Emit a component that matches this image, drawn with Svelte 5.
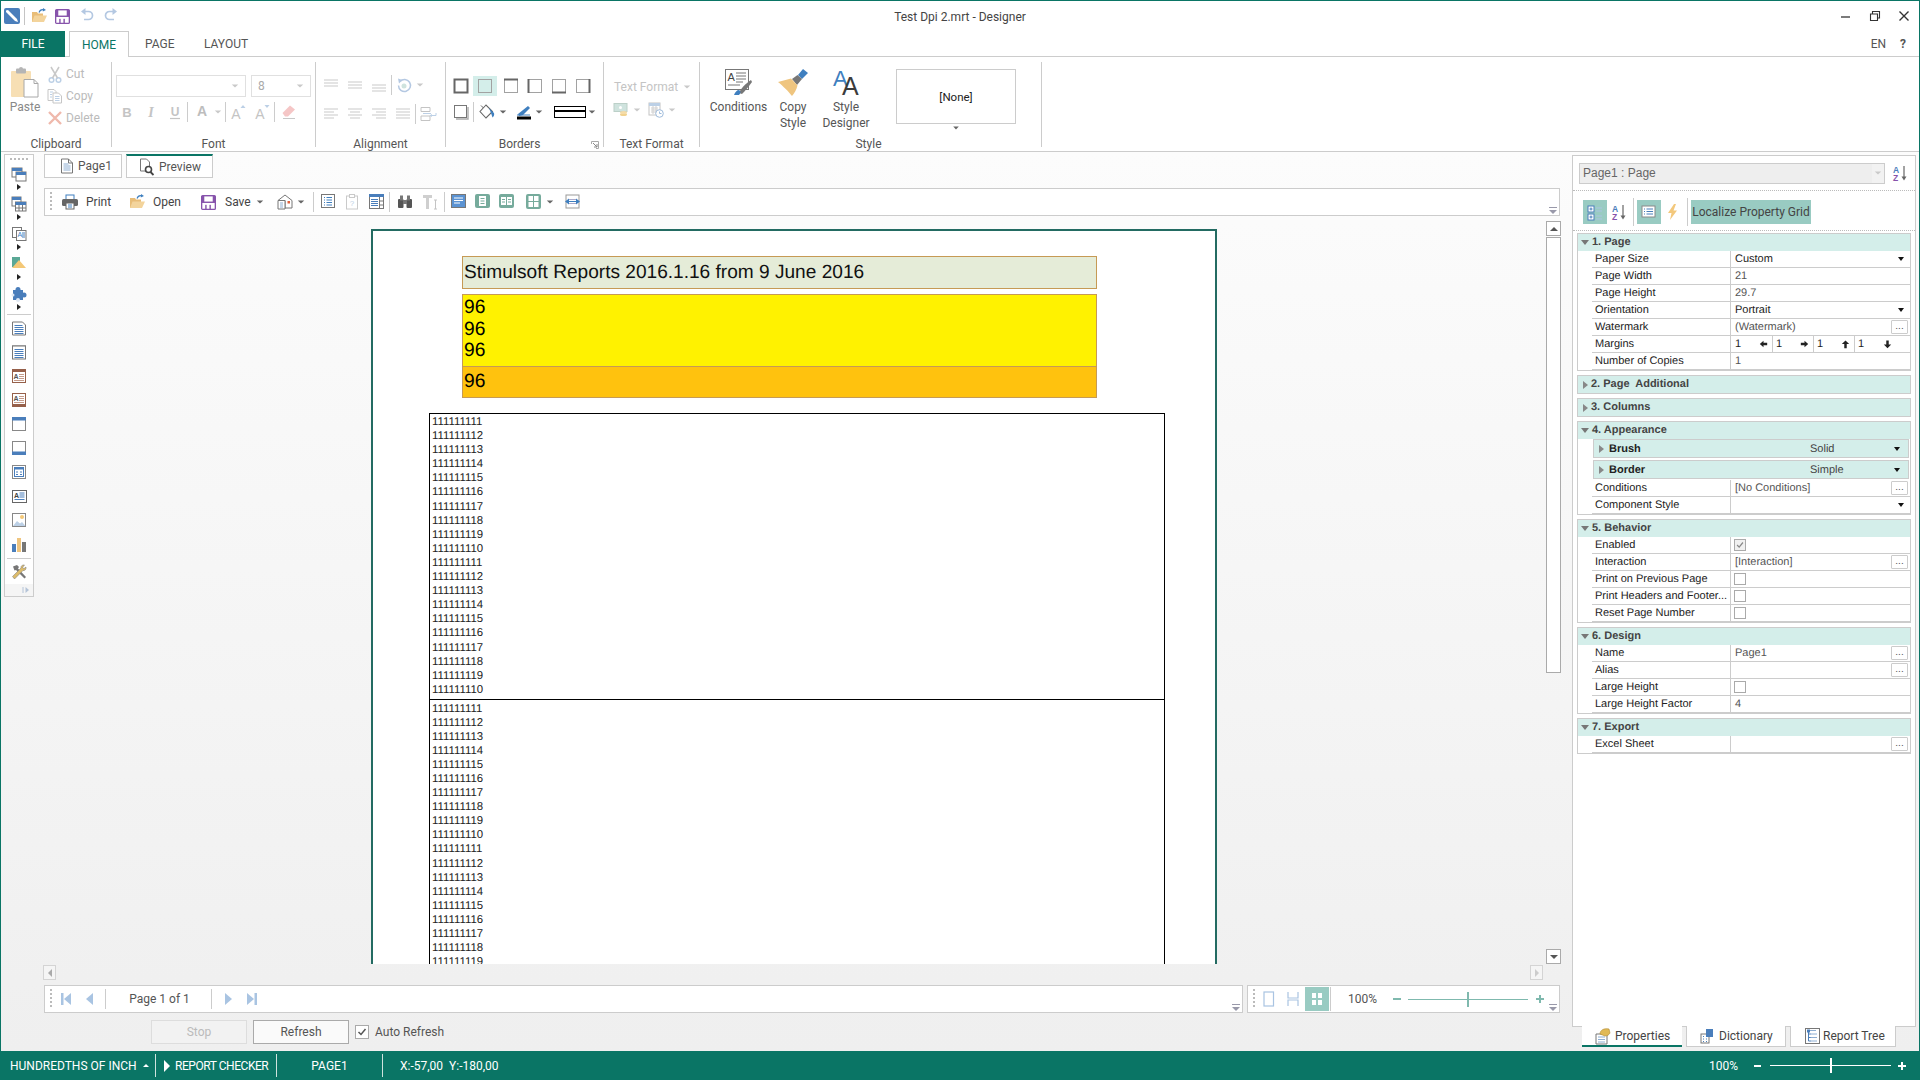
<script>
  // icons are plain svg fragments, 16x16 unless the caller sets a class
  const icons = {
    logo: '<rect width="16" height="16" rx="2" fill="#4a7ebb"/><path d="M2 2.5 4 2l9 9 1 3-3-1-9-9z" fill="#fff"/>',
    open: '<path d="M1 4h5l1 1.5h5V14H1z" fill="#e8bd78"/><path d="M1 14l2.5-6.5H16L13 14z" fill="#f3d49c"/><path d="M8 4.5C9 2 11 1.2 13 2" stroke="#3f7fbf" stroke-width="1.1" fill="none"/><path d="M12 0l3 2-3.2 1.6z" fill="#3f7fbf"/>',
    save: '<rect x=".7" y=".7" width="14.6" height="14.6" rx="1" fill="#fff" stroke="#8753ab" stroke-width="1.4"/><rect x="1" y="1" width="14" height="7.5" fill="#8753ab"/><rect x="3.5" y="1.5" width="9" height="5.5" fill="#fff"/><rect x="4.5" y="10.5" width="1.5" height="4.5" fill="#8753ab"/><rect x="9" y="10.5" width="1.5" height="4.5" fill="#8753ab"/>',
    undo: '<path d="M6 3.5H9.5a3.8 3.8 0 0 1 0 8H5" stroke="#b4c8e2" stroke-width="1.7" fill="none"/><path d="M6.5 0 2 3.5 6.5 7z" fill="#b4c8e2"/>',
    redo: '<path d="M10 3.5H6.5a3.8 3.8 0 0 0 0 8H11" stroke="#b4c8e2" stroke-width="1.7" fill="none"/><path d="M9.5 0 14 3.5 9.5 7z" fill="#b4c8e2"/>',
    paste: '<rect x="0" y="4" width="20" height="26" rx="1" fill="#f7dfb4"/><rect x="5" y="1.5" width="10" height="5" rx="1" fill="#b5b5b5"/><circle cx="10" cy="2" r="2" fill="#b5b5b5"/><path d="M13 12.5h10l4 4V30H13z" fill="#fff" stroke="#a8a8a8"/><path d="M23 12.5v4h4" fill="none" stroke="#a8a8a8"/>',
    cut: '<circle cx="4.5" cy="14" r="2.3" fill="none" stroke="#bcd0e6" stroke-width="1.5"/><circle cx="11.5" cy="14" r="2.3" fill="none" stroke="#bcd0e6" stroke-width="1.5"/><path d="M10.5 12 4 1M5.5 12 12 1" stroke="#c8c8c8" stroke-width="1.5"/>',
    copy: '<path d="M1 1.5h6l2 2v9H1z" fill="#fff" stroke="#c6c6c6"/><path d="M6 5h5.5L14.5 8v7H6z" fill="#fff" stroke="#c6c6c6"/><path d="M3 4h3M3 6.5h2M3 9h2M8 8.5h4.5M8 10.5h4.5M8 12.5h4.5" stroke="#bcd0e6"/>',
    del: '<path d="M2 2l12 12M14 2 2 14" stroke="#efb9ac" stroke-width="2.4"/>',
    bold: '<text x="8" y="13" text-anchor="middle" font-family="Liberation Sans" font-weight="700" font-size="13" fill="#c4c4c4">B</text>',
    ital: '<text x="8" y="13" text-anchor="middle" font-family="Liberation Serif" font-style="italic" font-weight="700" font-size="14" fill="#c4c4c4">I</text>',
    under: '<text x="8" y="12" text-anchor="middle" font-family="Liberation Sans" font-weight="700" font-size="12" fill="#c4c4c4">U</text><path d="M3 14.5h10" stroke="#c4c4c4" stroke-width="1.2"/>',
    fcolor: '<text x="8" y="12" text-anchor="middle" font-family="Liberation Sans" font-weight="700" font-size="14" fill="#bdbdbd">A</text>',
    grow: '<text x="6" y="15" text-anchor="middle" font-family="Liberation Sans" font-size="14" fill="#c4c4c4">A</text><path d="M10.5 4 13 1l2.5 3z" fill="#bcd0e6"/>',
    shrink: '<text x="6" y="15" text-anchor="middle" font-family="Liberation Sans" font-size="14" fill="#c4c4c4">A</text><path d="M10.5 1 13 4l2.5-3z" fill="#bcd0e6"/>',
    erase: '<path d="M1.5 9 9 1.5l5 4L7 12.5H4z" fill="#f5c6c6"/><path d="M2 14.5h12" stroke="#c8c8c8"/>',
    alTop: '<path d="M1 3h14M1 6h14M1 9h14" stroke="#c9c9c9"/>',
    alMid: '<path d="M1 5h14M1 8h14M1 11h14" stroke="#c9c9c9"/>',
    alBot: '<path d="M1 8h14M1 11h14M1 14h14" stroke="#c9c9c9"/>',
    rotate: '<path d="M4 4.5a6 6 0 1 1-1.5 4" fill="none" stroke="#b4c8e2" stroke-width="1.5"/><path d="M2 1.5 6.5 3 3 6.5z" fill="#b4c8e2"/><circle cx="8" cy="9" r="2.5" fill="#cfe3de"/>',
    left: '<path d="M1 3h14M1 6h10M1 9h14M1 12h10" stroke="#c9c9c9"/>',
    center: '<path d="M1 3h14M3 6h10M1 9h14M3 12h10" stroke="#c9c9c9"/>',
    right: '<path d="M1 3h14M5 6h10M1 9h14M5 12h10" stroke="#c9c9c9"/>',
    just: '<path d="M1 3h14M1 6h14M1 9h14M1 12h14" stroke="#c9c9c9"/>',
    wrap: '<path d="M1 1.5h9v4H1zM1 10h9v4.5H1z" fill="#fff" stroke="#c4c4c4"/><path d="M3 7.5h8M16 7v2.5h-5" stroke="#bcd0e6" fill="none"/><path d="M12 8l-2.5 1.5L12 11z" fill="#bcd0e6"/>',
    bAll: '<rect x="1.5" y="1.5" width="13" height="13" fill="none" stroke="#666" stroke-width="2"/>',
    bNone: '<rect x="1.5" y="1.5" width="13" height="13" fill="none" stroke="#a2a2a2" stroke-width="1"/>',
    bTop: '<rect x="1.5" y="1.5" width="13" height="13" fill="none" stroke="#a2a2a2"/><path d="M1 1.5h14" stroke="#666" stroke-width="2"/>',
    bLeft: '<rect x="1.5" y="1.5" width="13" height="13" fill="none" stroke="#a2a2a2"/><path d="M1.5 1v14" stroke="#666" stroke-width="2"/>',
    bBot: '<rect x="1.5" y="1.5" width="13" height="13" fill="none" stroke="#a2a2a2"/><path d="M1 14.5h14" stroke="#666" stroke-width="2"/>',
    bRight: '<rect x="1.5" y="1.5" width="13" height="13" fill="none" stroke="#a2a2a2"/><path d="M14.5 1v14" stroke="#666" stroke-width="2"/>',
    bShadow: '<rect x="1.5" y="1.5" width="12" height="12" fill="none" stroke="#777"/><path d="M15 3v12H3" fill="none" stroke="#aaa" stroke-width="1.4"/>',
    fill: '<path d="M7 1 1 7.5 7 14l6.5-6.5z" fill="#fff" stroke="#666" stroke-width="1.1"/><path d="M4.5 4 2 1.5" stroke="#666"/><path d="M10 4 15 9c.6 2-.4 4-1.5 4.5L12 9z" fill="#3f7fbf"/>',
    pencil: '<path d="M2 10 12 2l2 2-7 7-4 1z" fill="#3f7fbf"/><path d="M1 11h13" stroke="#3f7fbf"/><rect x="1" y="12.5" width="14" height="3" fill="#000"/>',
    money: '<rect x="1" y="1.5" width="13" height="8" fill="#cfe3de" stroke="#bcd0c8"/><circle cx="7.5" cy="5.5" r="1.5" fill="#fff"/><ellipse cx="10.5" cy="12.5" rx="3.5" ry="1.5" fill="#f1d28f"/><ellipse cx="10.5" cy="10.5" rx="3.5" ry="1.5" fill="#f5dca8"/>',
    cal: '<rect x="1" y="1" width="11" height="12" fill="#fff" stroke="#c4c4c4"/><rect x="1" y="1" width="11" height="3" fill="#bcd0e6"/><path d="M3 6h7M3 8h7M3 10h7M5 4v8M8 4v8" stroke="#cfcfcf"/><circle cx="11.5" cy="11.5" r="3.8" fill="#fff" stroke="#9fbcdc"/><path d="M11.5 9.5v2h2" stroke="#9fbcdc" fill="none"/>',
    cond: '<rect x=".5" y=".5" width="23" height="20" fill="#fff" stroke="#777"/><text x="2.5" y="12" font-family="Liberation Sans" font-size="11" fill="#444">A</text><path d="M11 4h10M11 7h10M11 10h10M11 13h7M3 16h12" stroke="#777"/><path d="M14 24c1.5-4 6-9 12-13l1 2c-3 4-7 9-10 12z" fill="#777"/><path d="M9 26c1-3 3-5 5-5 2 1 2 3 0 5z" fill="#3f7fbf"/>',
    brush: '<path d="M24 0l5 4-6 6-4-4z" fill="#3f7fbf"/><path d="M18.5 6 13 10l5 6 5-6z" fill="#777"/><path d="M-1 13 12 9.500l6.500 7c-1 4-3 8-5.500 10.500C10 23 4 17 -1 13z" fill="#efc57f"/>',
    styleD: '<text x="1" y="17" font-family="Liberation Sans" font-size="22" fill="#3f7fbf">A</text><text x="10" y="26" font-family="Liberation Sans" font-size="25" fill="#3c3c3c">A</text>',
    doc: '<path d="M2.5 1h7l4 4v10h-11z" fill="#fff" stroke="#777"/><path d="M9.5 1v4h4" fill="none" stroke="#777"/><path d="M4.5 6h5M4.5 8h7M4.5 10h7M4.5 12h7" stroke="#8eaed2"/>',
    preview: '<path d="M1.5 0h6l3 3v9h-9z" fill="#fff" stroke="#777"/><circle cx="9.5" cy="10.5" r="3" fill="#fff" stroke="#444" stroke-width="1.6"/><path d="M11.5 13l3 3" stroke="#444" stroke-width="1.8"/>',
    print: '<rect x="4" y="1" width="8" height="5" fill="#fff" stroke="#3f7fbf"/><rect y="5" width="16" height="7" rx="1.5" fill="#666"/><rect x="4" y="9" width="8" height="6" fill="#fff" stroke="#666"/><path d="M6 11h4M6 13h4" stroke="#3f7fbf"/>',
    send: '<path d="M1 6.5 8 1l7 5.5V14H8V6.5H1z" fill="#fff" stroke="#777"/><path d="M1 6.5h7V15H1z" fill="#fff" stroke="#777"/><path d="M3 9h3M3 11h3M3 13h3" stroke="#8eaed2"/><rect x="10.5" y="7" width="2.5" height="2.5" fill="#e0603c"/>',
    tbToc: '<rect x=".5" y=".5" width="13" height="13" fill="#fff" stroke="#777"/><path d="M3 3.5h1M5.5 3.5H11M3 6h1M5.5 6H11M3 8.5h1M5.5 8.5H11M3 11h1M5.5 11H11" stroke="#3f7fbf"/>',
    tbClip: '<rect x="1.5" y="2" width="11" height="13" fill="#fff" stroke="#cacaca"/><rect x="4.5" y=".5" width="5" height="3" fill="#fff" stroke="#cacaca"/><text x="7" y="12" text-anchor="middle" font-family="Liberation Sans" font-size="8" fill="#bcd0e6">?</text>',
    tbTable: '<rect x=".5" y=".5" width="14" height="14" fill="#fff" stroke="#777"/><rect width="15" height="3" fill="#4a7ebb"/><path d="M2 5.5h7M2 7.5h7M2 9.5h7M2 11.5h7" stroke="#4a7ebb"/><path d="M10.5 3v12M10.5 7h4M10.5 11h4" stroke="#777"/>',
    binoc: '<rect x="1" y="5" width="5.5" height="9" rx="1" fill="#555"/><rect x="9.5" y="5" width="5.5" height="9" rx="1" fill="#555"/><rect x="3" y="1.5" width="3" height="5" fill="#777"/><rect x="10" y="1.5" width="3" height="5" fill="#777"/><rect x="6" y="6" width="4" height="4" fill="#777"/>',
    tbT: '<path d="M1 1h9v3H7v11H4V4H1z" fill="#cfcfcf"/><path d="M12 6h3M13.5 6v9M12 15h3" stroke="#c4c4c4"/>',
    vOne: '<rect x=".5" y=".5" width="14" height="13" fill="#5b93d3" stroke="#777"/><path d="M3 4h9M3 6.5h9M3 9h6" stroke="#fff"/>',
    vTwo: '<rect width="15" height="14" rx="2" fill="#76ab9c"/><rect x="4" y="2" width="7" height="10" fill="#fff"/><path d="M5.5 4.5h4M5.5 7h4M5.5 9.5h4" stroke="#76ab9c"/>',
    vThree: '<rect width="15" height="14" rx="2" fill="#76ab9c"/><rect x="2" y="3" width="5" height="8" fill="#fff"/><rect x="8" y="3" width="5" height="8" fill="#fff"/><path d="M3 5.5h3M3 8h3M9 5.5h3M9 8h3" stroke="#76ab9c"/>',
    vFour: '<rect width="15" height="15" rx="2" fill="#76ab9c"/><rect x="2.5" y="2" width="4.5" height="5" fill="#fff"/><rect x="8" y="2" width="4.5" height="5" fill="#fff"/><rect x="2.5" y="8" width="4.5" height="5" fill="#fff"/><rect x="8" y="8" width="4.5" height="5" fill="#fff"/>',
    vFit: '<rect x="1" y="1" width="13" height="13" fill="#fff" stroke="#999"/><path d="M4 5.5h7M4 9.5h7" stroke="#aac"/><path d="M0 7.5 4 4.5v6zM15 7.5l-4-3v6z" fill="#3f7fbf"/><path d="M3 7.5h9" stroke="#3f7fbf"/>',
    tPage: '<rect x="0" y="1" width="10" height="9" fill="#fff" stroke="#777"/><rect y="1" width="10" height="3" fill="#4a7ebb"/><rect x="4" y="5" width="10" height="9" fill="#fff" stroke="#777"/><rect x="4" y="5" width="10" height="3" fill="#4a7ebb"/>',
    tTable: '<rect x="0" y="0" width="9" height="9" fill="#fff" stroke="#777"/><rect width="9" height="3" fill="#4a7ebb"/><rect x="3.5" y="5" width="10.5" height="9" fill="#fff" stroke="#777"/><rect x="3.5" y="5" width="10.5" height="3" fill="#4a7ebb"/><path d="M7 8v6M10.5 8v6M3.5 11H14" stroke="#777"/>',
    tCross: '<rect x=".5" y=".5" width="9" height="10" fill="#fff" stroke="#777"/><rect x="4.5" y="3.5" width="9.5" height="10" fill="#fff" stroke="#777"/><text x="5.5" y="10" font-family="Liberation Sans" font-size="7" fill="#3f7fbf">A</text><path d="M10 6h3M10 8h3M10 10h3" stroke="#4a7ebb"/>',
    tShape: '<rect x="0" y="0" width="8" height="10" fill="#5aa896"/><path d="M0 11 7 3l7 8z" fill="#f4c877"/>',
    tPuzzle: '<rect x="1" y="3" width="10" height="10" fill="#4a7ebb"/><circle cx="6" cy="2.5" r="2.5" fill="#4a7ebb"/><circle cx="12" cy="8" r="2.5" fill="#4a7ebb"/><circle cx="6" cy="13" r="2" fill="#dfe8f3"/><circle cx="1" cy="8" r="1.5" fill="#dfe8f3"/>',
    tRep: '<path d="M.5 1h10l3 3v10H.5z" fill="#fff" stroke="#777"/><path d="M2.5 4.5h8M2.5 6.5h9M2.5 8.5h9M2.5 10.5h9M2.5 12.5h9" stroke="#4a7ebb"/>',
    tData: '<rect x=".5" y="1" width="13" height="13" fill="#fff" stroke="#777"/><path d="M2.5 4.5h9M2.5 6.5h9M2.5 8.5h9M2.5 10.5h9M2.5 12.5h9" stroke="#4a7ebb"/><path d="M.5 .5h13" stroke="#777" stroke-dasharray="1 1"/>',
    tHead: '<rect x=".5" y=".5" width="13" height="13" fill="#fff" stroke="#96604a"/><rect width="14" height="3" fill="#96604a"/><text x="1.5" y="10" font-family="Liberation Sans" font-size="7" font-weight="700" fill="#555">A</text><path d="M7 5.5h5M7 7.5h5M7 9.5h5M2 11.5h10" stroke="#c59b8a"/>',
    tFoot: '<rect x=".5" y=".5" width="13" height="13" fill="#fff" stroke="#96604a"/><rect y="11" width="14" height="3" fill="#96604a"/><text x="1.5" y="8" font-family="Liberation Sans" font-size="7" font-weight="700" fill="#555">A</text><path d="M7 3.5h5M7 5.5h5M7 7.5h5M2 9.5h10" stroke="#c59b8a"/>',
    tTop: '<rect x=".5" y=".5" width="13" height="13" fill="#fff" stroke="#888"/><rect width="14" height="3.5" fill="#4a7ebb"/>',
    tBot: '<rect x=".5" y=".5" width="13" height="13" fill="#fff" stroke="#888"/><rect y="10.5" width="14" height="3.5" fill="#4a7ebb"/>',
    tBand: '<rect x=".5" y=".5" width="13" height="13" fill="#fff" stroke="#888"/><rect x="2.5" y="2.5" width="9" height="9" fill="#fff" stroke="#4a7ebb"/><rect x="2.5" y="2.5" width="9" height="2" fill="#4a7ebb"/><path d="M4 7h2M8 7h2M4 9.5h2M8 9.5h2" stroke="#4a7ebb"/>',
    tText: '<rect x=".5" y="1.5" width="14" height="12" fill="#fff" stroke="#666"/><text x="2" y="8.5" font-family="Liberation Sans" font-size="7" font-weight="700" fill="#444">A</text><path d="M7.5 4h5M7.5 6h5M7.5 8h5M2.5 10.5h10" stroke="#4a7ebb"/>',
    tImg: '<rect x=".5" y=".5" width="13" height="13" fill="#fff" stroke="#888"/><path d="M1 13l4-5 3 2.5 2-1.5 3.5 4z" fill="#bcd0e6"/><circle cx="10" cy="4" r="2" fill="#f4c877"/>',
    tChart: '<rect x="0" y="7" width="4" height="8" fill="#4a7ebb"/><rect x="5" y="1" width="4" height="14" fill="#efc57f"/><rect x="10" y="5" width="4" height="10" fill="#777"/>',
    tTools: '<path d="M2 2.5 6 1l2 2-1 1.5 8 8.5-1.5 1.5L5 6 3.5 6.5z" fill="#777"/><path d="M13.5 1c-2-.5-4 1-3.500 3L1.500 12.500 3.500 15 12 6.500c2 .5 3.500-1.500 3-3.500l-2 1.500-1.500-1z" fill="#dcbb6a" stroke="#777" stroke-width=".5"/>',
    groupCat: '<rect x="1" y="2" width="6" height="6" fill="#fff" stroke="#4a7ebb"/><rect x="1" y="10" width="6" height="6" fill="#fff" stroke="#4a7ebb"/><path d="M2.5 5h3M4 3.5v3M2.5 13h3M4 11.5v3" stroke="#4a7ebb"/><path d="M9 4h6M9 7h6M9 12h6M9 15h6" stroke="#a9c4e2"/>',
    sortAz: '<text x="0" y="7.5" font-family="Liberation Sans" font-weight="700" font-size="8.5" fill="#4a7ebb">A</text><text x="0" y="16" font-family="Liberation Sans" font-weight="700" font-size="8.5" fill="#8753ab">Z</text><path d="M11 1v13" stroke="#666" stroke-width="1.2"/><path d="M8.5 11.5 11 15.5l2.5-4z" fill="#666"/>',
    list: '<rect x="1" y="2" width="13" height="11" fill="#fff" stroke="#8a8a8a"/><path d="M3 5h1M5.5 5H12M3 7.5h1M5.5 7.5H12M3 10h1M5.5 10H12" stroke="#4a7ebb"/>',
    bolt: '<path d="M9 0 3 9h3.5L5 16l7-9.5H8.5L11 0z" fill="#f3c87c"/>',
    tabProps: '<path d="M1 6h11v10H1z" fill="#fff" stroke="#777"/><path d="M3 9h7M3 11.5h7M3 14h7" stroke="#8eaed2"/><path d="M5 6c0-4 4-6 9-5l1 4c-1 2-3 3-5 3z" fill="#e0b956" stroke="#b08a30" stroke-width=".6"/>',
    tabDict: '<rect x="1" y="6" width="8" height="9" fill="#fff" stroke="#777"/><rect x="6" y="1" width="7" height="8" fill="#4a7ebb"/><path d="M3 8.5h1M6 8.5h1M3 11h1M6 11h1M3 13.5h1M6 13.5h1" stroke="#4a7ebb"/>',
    tabTree: '<rect x=".5" y=".5" width="14" height="15" fill="#fff" stroke="#777"/><path d="M4 2.5h7M5 6h7M5 9.5h7M5 13h7" stroke="#8eaed2"/><rect x="2" y="1.5" width="3" height="3" fill="#4a7ebb"/><path d="M3.5 4v9M3.5 6h2M3.5 9.5h2M3.5 13h2" stroke="#4a7ebb"/>',
    first: '<rect x="3" y="2" width="2.5" height="12" fill="#a9c4e2"/><path d="M13 2v12L6 8z" fill="#a9c4e2"/>',
    prev: '<path d="M11 2v12L4 8z" fill="#a9c4e2"/>',
    next: '<path d="M5 2v12l7-6z" fill="#a9c4e2"/>',
    last: '<rect x="10.5" y="2" width="2.5" height="12" fill="#a9c4e2"/><path d="M3 2v12l7-6z" fill="#a9c4e2"/>',
    zPage: '<rect x="3" y="1" width="9.5" height="14" fill="none" stroke="#a9c4e2" stroke-width="1.2"/>',
    zWidth: '<path d="M3 1v6h10V1M3 15V9h10v6" fill="none" stroke="#a9c4e2" stroke-width="1.2"/>',
    zMulti: '<rect x="3" y="2" width="4" height="5" fill="#fff"/><rect x="9" y="2" width="4" height="5" fill="#fff"/><rect x="3" y="9" width="4" height="5" fill="#fff"/><rect x="9" y="9" width="4" height="5" fill="#fff"/>'
  };

  const toolsMore = ["tPage", "tTable", "tCross", "tShape", "tPuzzle"];
  const toolsBands = ["tRep", "tData", "tHead", "tFoot", "tTop", "tBot", "tBand", "tText", "tImg", "tChart"];

  const sections = [
    { title: "1. Page", open: true, rows: [
      { l: "Paper Size", v: "Custom", t: "drop" },
      { l: "Page Width", v: "21", dim: true },
      { l: "Page Height", v: "29.7", dim: true },
      { l: "Orientation", v: "Portrait", t: "drop" },
      { l: "Watermark", v: "(Watermark)", t: "dots", dim: true },
      { l: "Margins", t: "margins" },
      { l: "Number of Copies", v: "1", dim: true }
    ] },
    { title: "2. Page  Additional" },
    { title: "3. Columns" },
    { title: "4. Appearance", open: true,
      subs: [{ l: "Brush", v: "Solid" }, { l: "Border", v: "Simple" }],
      rows: [
        { l: "Conditions", v: "[No Conditions]", t: "dots", dim: true },
        { l: "Component Style", v: "", t: "drop" }
      ] },
    { title: "5. Behavior", open: true, rows: [
      { l: "Enabled", t: "checked" },
      { l: "Interaction", v: "[Interaction]", t: "dots", dim: true },
      { l: "Print on Previous Page", t: "check" },
      { l: "Print Headers and Footer...", t: "check" },
      { l: "Reset Page Number", t: "check" }
    ] },
    { title: "6. Design", open: true, rows: [
      { l: "Name", v: "Page1", t: "dots", dim: true },
      { l: "Alias", v: "", t: "dots" },
      { l: "Large Height", t: "check" },
      { l: "Large Height Factor", v: "4", dim: true }
    ] },
    { title: "7. Export", open: true, rows: [{ l: "Excel Sheet", v: "", t: "dots" }] }
  ];

  const margins = [
    { v: "1", arrow: "M1 5 5.5 1v2.5H10v3H5.5V9z" },
    { v: "1", arrow: "M10 5 5.5 1v2.5H1v3h4.5V9z" },
    { v: "1", arrow: "M5.5 .5 10 5H7v5H4V5H1z" },
    { v: "1", arrow: "M5.5 10 10 5.5H7v-5H4v5H1z" }
  ];

  const listRows = ["111111111", "111111112", "111111113", "111111114", "111111115", "111111116", "111111117", "111111118", "111111119", "111111110"];
  const twenty = [...listRows, ...listRows];
</script>

{#snippet ic(name, cls = "")}
  <svg class="ic {cls}" viewBox="0 0 16 16">{@html icons[name]}</svg>
{/snippet}

{#snippet big(name, cls = "")}
  <svg class="big {cls}" viewBox="0 0 28 30">{@html icons[name]}</svg>
{/snippet}

{#snippet dn(cls = "")}
  <span class="dn {cls}"></span>
{/snippet}

{#snippet grip()}
  <span class="grip"></span>
{/snippet}

<div class="app">
  <header class="titlebar">
    <div class="qat">
      <span class="q-logo">{@render ic("logo")}</span>
      <span class="q-sep"></span>
      <span class="q-open">{@render ic("open")}</span>
      <span class="q-save">{@render ic("save", "s15")}</span>
      <span class="q-undo">{@render ic("undo")}</span>
      <span class="q-redo">{@render ic("redo")}</span>
    </div>
    <div class="title">Test Dpi 2.mrt - Designer</div>
    <div class="winctl">
      <svg viewBox="0 0 12 12"><path d="M1 7h9" stroke="#333" stroke-width="1.3"/></svg>
      <svg viewBox="0 0 12 12"><path d="M1.5 4h7v6.5h-7zM3.5 4V1.5h7V8H8.5" fill="none" stroke="#333" stroke-width="1.1"/></svg>
      <svg viewBox="0 0 12 12"><path d="M1.5 1.5l9 9M10.5 1.5l-9 9" stroke="#333" stroke-width="1.4"/></svg>
    </div>
  </header>

  <nav class="tabs">
    <div class="tab-file">FILE</div>
    <div class="tab-home">HOME</div>
    <div class="tab-page">PAGE</div>
    <div class="tab-layout">LAYOUT</div>
    <div class="tabs-right"><span>EN</span><span class="help">?</span></div>
  </nav>

  <section class="ribbon">
    <div class="grp g-clip">
      <div class="grp-body clip-body">
        <div class="paste">
          {@render big("paste")}
          <span>Paste</span>
        </div>
        <div class="clip-list">
          <div>{@render ic("cut", "s18")}<span>Cut</span></div>
          <div>{@render ic("copy")}<span>Copy</span></div>
          <div>{@render ic("del")}<span>Delete</span></div>
        </div>
      </div>
      <div class="grp-label">Clipboard</div>
    </div>

    <div class="grp g-font">
      <div class="grp-body font-body">
        <div class="combos">
          <div class="combo c-name">{@render dn("lite")}</div>
          <div class="combo c-size"><span>8</span>{@render dn("lite")}</div>
        </div>
        <div class="irow font-row">
          <span class="cell">{@render ic("bold")}</span>
          <span class="cell">{@render ic("ital")}</span>
          <span class="cell">{@render ic("under")}</span>
          <span class="vsep"></span>
          <span class="cell c-fcolor">{@render ic("fcolor")}</span>
          {@render dn("lite")}
          <span class="vsep sep-f"></span>
          <span class="cell">{@render ic("grow")}</span>
          <span class="cell">{@render ic("shrink")}</span>
          <span class="vsep"></span>
          <span class="cell c-erase">{@render ic("erase")}</span>
        </div>
      </div>
      <div class="grp-label">Font</div>
    </div>

    <div class="grp g-align">
      <div class="grp-body align-body">
        <div class="irow a-row1">
          <span class="cell">{@render ic("alTop")}</span>
          <span class="cell">{@render ic("alMid")}</span>
          <span class="cell">{@render ic("alBot")}</span>
          <span class="vsep"></span>
          <span class="cell">{@render ic("rotate")}</span>
          {@render dn("lite")}
        </div>
        <div class="irow a-row2">
          <span class="cell">{@render ic("left")}</span>
          <span class="cell">{@render ic("center")}</span>
          <span class="cell">{@render ic("right")}</span>
          <span class="cell">{@render ic("just")}</span>
          <span class="vsep"></span>
          <span class="cell">{@render ic("wrap")}</span>
        </div>
      </div>
      <div class="grp-label">Alignment</div>
    </div>

    <div class="grp g-border">
      <div class="grp-body border-body">
        <div class="irow b-row1">
          <span class="cell">{@render ic("bAll")}</span>
          <span class="cell on">{@render ic("bNone")}</span>
          <span class="cell c-btop">{@render ic("bTop")}</span>
          <span class="cell">{@render ic("bLeft")}</span>
          <span class="cell">{@render ic("bBot")}</span>
          <span class="cell">{@render ic("bRight")}</span>
        </div>
        <div class="irow b-row2">
          <span class="cell">{@render ic("bShadow")}</span>
          <span class="vsep"></span>
          <span class="cell c-fill">{@render ic("fill")}</span>
          {@render dn()}
          <span class="cell c-pen">{@render ic("pencil")}</span>
          {@render dn()}
          <span class="line-style"></span>
          {@render dn()}
        </div>
      </div>
      <div class="grp-label l-border">Borders</div>
      <svg class="launcher" viewBox="0 0 8 8"><path d="M.5 3V.5h7v7H5" fill="none" stroke="#aaa"/><path d="M2 2l4 4M6 3v3H3" fill="none" stroke="#888"/></svg>
    </div>

    <div class="grp g-format">
      <div class="grp-body format-body">
        <div class="fmt-text"><span>Text Format</span>{@render dn("lite")}</div>
        <div class="irow fmt-row">
          <span class="cell">{@render ic("money")}</span>
          {@render dn("lite")}
          <span class="cell c-cal">{@render ic("cal")}</span>
          {@render dn("lite")}
        </div>
      </div>
      <div class="grp-label">Text Format</div>
    </div>

    <div class="grp g-style">
      <div class="grp-body style-body">
        <div class="bigbtn b-cond">{@render big("cond")}<span>Conditions</span></div>
        <div class="bigbtn b-copy">{@render big("brush")}<span>Copy<br />Style</span></div>
        <div class="bigbtn b-design">{@render big("styleD")}<span>Style<br />Designer</span></div>
        <div class="none-wrap">
          <div class="none-box">[None]</div>
          {@render dn()}
        </div>
      </div>
      <div class="grp-label l-style">Style</div>
    </div>
  </section>

  <main class="work">
    <aside class="toolbox">
      <div class="tool-grip"></div>
      {#each toolsMore as t}
        <div class="tool more">{@render ic(t, "s14")}<span class="caret"></span></div>
      {/each}
      <div class="tool-sep sep-1"></div>
      {#each toolsBands as t}
        <div class="tool">{@render ic(t, "s14")}</div>
      {/each}
      <div class="tool-sep"></div>
      <div class="tool">{@render ic("tTools")}</div>
      <div class="tool-foot">
        <svg viewBox="0 0 8 8"><path d="M1 1v6" stroke="#b5c4d8"/><path d="M3.5 1v6L7 4z" fill="#b5c4d8"/></svg>
      </div>
    </aside>

    <div class="center">
      <div class="doc-tabs">
        <div class="doc-tab t-page">{@render ic("doc")}<span>Page1</span></div>
        <div class="doc-tab t-prev">{@render ic("preview")}<span>Preview</span></div>
      </div>

      <div class="toolbar">
        {@render grip()}
        <div class="tbtn w-print">{@render ic("print")}<span>Print</span></div>
        <div class="tbtn w-open">{@render ic("open")}<span>Open</span></div>
        <div class="tbtn w-save">{@render ic("save", "s15")}<span>Save</span></div>
        {@render dn()}
        <span class="cell c-send">{@render ic("send")}</span>
        {@render dn()}
        <span class="vsep sep-a"></span>
        <span class="cell">{@render ic("tbToc")}</span>
        <span class="cell">{@render ic("tbClip")}</span>
        <span class="cell">{@render ic("tbTable")}</span>
        <span class="vsep sep-b"></span>
        <span class="cell">{@render ic("binoc")}</span>
        <span class="cell c-t">{@render ic("tbT")}</span>
        <span class="vsep sep-c"></span>
        <span class="cell">{@render ic("vOne")}</span>
        <span class="cell">{@render ic("vTwo")}</span>
        <span class="cell">{@render ic("vThree")}</span>
        <span class="cell c-v4">{@render ic("vFour")}</span>
        {@render dn()}
        <span class="cell c-fit">{@render ic("vFit")}</span>
        <span class="end-grip"></span>
      </div>

      <div class="viewer">
        <div class="canvas">
          <div class="page">
            <div class="band-title">Stimulsoft Reports 2016.1.16 from 9 June 2016</div>
            <div class="band-yellow"><div>96</div><div>96</div><div>96</div></div>
            <div class="band-orange">96</div>
            <div class="list">
              {#each twenty as r}<div>{r}</div>{/each}
            </div>
            <div class="list second">
              {#each twenty.slice(0, 19) as r}<div>{r}</div>{/each}
            </div>
          </div>
        </div>
        <div class="vscroll">
          <div class="sb-btn"><span class="up"></span></div>
          <div class="sb-thumb"></div>
          <div class="sb-gap"></div>
          <div class="sb-btn"><span class="down"></span></div>
        </div>
      </div>
      <div class="hscroll">
        <div class="sb-h"><span class="lt"></span></div>
        <div class="sb-h"><span class="rt"></span></div>
      </div>

      <div class="nav-row">
        <div class="navbar">
          {@render grip()}
          <span class="cell c-first">{@render ic("first")}</span>
          <span class="cell">{@render ic("prev")}</span>
          <span class="vsep sep-n"></span>
          <span class="pageof">Page 1 of 1</span>
          <span class="vsep"></span>
          <span class="cell c-next">{@render ic("next")}</span>
          <span class="cell">{@render ic("last")}</span>
          <span class="end-grip"></span>
        </div>
        <div class="zoombar">
          {@render grip()}
          <span class="cell z-a">{@render ic("zPage")}</span>
          <span class="cell">{@render ic("zWidth")}</span>
          <span class="cell z-on">{@render ic("zMulti")}</span>
          <span class="vsep sep-z"></span>
          <span class="zoom-val">100%</span>
          <span class="zm-minus"></span>
          <div class="slider"><span></span></div>
          <span class="zm-plus"></span>
          <span class="end-grip"></span>
        </div>
      </div>

      <div class="btn-row">
        <button class="btn" disabled>Stop</button>
        <button class="btn">Refresh</button>
        <label class="auto"><span class="chk"><svg viewBox="0 0 12 12"><path d="M2.5 6 5 8.5 9.500 3" fill="none" stroke="#555" stroke-width="1.5"/></svg></span>Auto Refresh</label>
      </div>
    </div>

    <aside class="side">
      <div class="panel">
        <div class="prop-top">
          <div class="prop-combo"><span>Page1 : Page</span><i>{@render dn("lite")}</i></div>
          {@render ic("sortAz")}
        </div>
        <div class="prop-tools">
          <span class="pbtn on">{@render ic("groupCat")}</span>
          <span class="pbtn plain az">{@render ic("sortAz")}</span>
          <span class="psep sep-first"></span>
          <span class="pbtn on">{@render ic("list")}</span>
          <span class="pbtn plain bolt">{@render ic("bolt")}</span>
          <span class="psep sep-last"></span>
          <span class="ploc">Localize Property Grid</span>
        </div>
        <div class="props">
          {#each sections as s}
            <div class="sec" class:closed={!s.open}>
              <div class="sec-head">
                <span class={s.open ? "tri-open" : "tri-closed"}></span>{s.title}
              </div>
              {#if s.subs}
                {#each s.subs as sub}
                  <div class="sub">
                    <span class="tri-closed"></span><b>{sub.l}</b><em>{sub.v}</em><span class="dd"></span>
                  </div>
                {/each}
              {/if}
              {#if s.rows}
                {#each s.rows as r}
                  <div class="row">
                    <div class="r-label">{r.l}</div>
                    <div class="r-val" class:dim={r.dim}>
                      {#if r.t === "margins"}
                        {#each margins as m}
                          <span class="mg"><span>{m.v}</span><svg viewBox="0 0 11 11"><path d={m.arrow} fill="#222"/></svg></span>
                        {/each}
                      {:else if r.t === "check" || r.t === "checked"}
                        <span class="box" class:ticked={r.t === "checked"}>
                          {#if r.t === "checked"}
                            <svg viewBox="0 0 12 12"><path d="M2.5 6 5 8.5 9.5 3" fill="none" stroke="#888" stroke-width="1.5"/></svg>
                          {/if}
                        </span>
                      {:else}
                        <span class="r-text">{r.v}</span>
                        {#if r.t === "drop"}<span class="dd"></span>{/if}
                        {#if r.t === "dots"}<span class="dots">...</span>{/if}
                      {/if}
                    </div>
                  </div>
                {/each}
              {/if}
            </div>
          {/each}
        </div>
      </div>
      <div class="side-tabs">
        <div class="stab active">{@render ic("tabProps")}<span>Properties</span></div>
        <div class="stab">{@render ic("tabDict")}<span>Dictionary</span></div>
        <div class="stab tree">{@render ic("tabTree")}<span>Report Tree</span></div>
      </div>
    </aside>
  </main>

  <footer class="status">
    <div class="st st-unit">HUNDREDTHS OF INCH<span class="st-up"></span></div>
    <div class="st st-check"><span class="st-right"></span><span class="st-name">REPORT CHECKER</span></div>
    <div class="st st-page">PAGE1</div>
    <div class="st-pos">X:-57,00&nbsp;&nbsp;Y:-180,00</div>
    <div class="st-zoom">
      <span>100%</span>
      <i class="st-minus"></i>
      <div class="st-slider"><span></span></div>
      <i class="st-plus"></i>
    </div>
  </footer>
</div>

<style>
  :global(body) {
    margin: 0;
    background: #f0f0f0;
  }
  .app {
    width: 1920px;
    height: 1080px;
    box-sizing: border-box;
    display: flex;
    flex-direction: column;
    overflow: hidden;
    background: #fff;
    border: 1px solid #0a7565;
    border-width: 1px 1px 0;
    font-family: Roboto, "Liberation Sans", sans-serif;
    font-size: 12px;
    color: #444;
  }
  .ic {
    width: 16px;
    height: 16px;
    display: block;
    flex: none;
    overflow: visible;
  }
  .ic.s14 { transform: translate(1px, 1px); }
  .ic.s15 { width: 15px; height: 15px; }
  .ic.s18 { width: 16px; height: 18px; }
  .big {
    width: 28px;
    height: 30px;
    display: block;
    overflow: visible;
  }
  .dn {
    width: 0;
    height: 0;
    flex: none;
    border-left: 4px solid transparent;
    border-right: 4px solid transparent;
    border-top: 4px solid #666;
    transform: scale(0.8);
  }
  .dn.lite { border-top-color: #c9c9c9; }
  .cell {
    width: 24px;
    height: 20px;
    flex: none;
    display: flex;
    align-items: center;
    justify-content: center;
  }
  .vsep {
    width: 1px;
    height: 20px;
    flex: none;
    background: #ccc;
  }
  .irow {
    display: flex;
    align-items: center;
  }
  .grip {
    width: 2px;
    height: 20px;
    flex: none;
    background-image: linear-gradient(#bbb 50%, transparent 50%);
    background-size: 2px 4px;
    margin-left: 5px;
  }
  .end-grip {
    margin-left: auto;
    width: 8px;
    height: 6px;
    flex: none;
    align-self: flex-end;
    margin-right: 2px;
    margin-bottom: 2px;
    border-top: 1px solid #99a;
    box-sizing: border-box;
    position: relative;
  }
  .end-grip::after {
    content: "";
    position: absolute;
    left: 0;
    top: 2px;
    border-left: 4px solid transparent;
    border-right: 4px solid transparent;
    border-top: 4px solid #99a;
  }

  /* title bar */
  .titlebar {
    height: 30px;
    flex: none;
    display: flex;
    align-items: center;
    position: relative;
  }
  .qat {
    display: flex;
    align-items: center;
    height: 30px;
  }
  .q-logo { margin-left: 3px; margin-top: -1px; }
  .q-sep {
    width: 1px;
    height: 18px;
    margin-left: 4px;
    background: #c4c4c4;
  }
  .q-open { margin-left: 6px; }
  .q-save { margin-left: 8px; }
  .q-undo { margin-left: 9px; }
  .q-redo { margin-left: 8px; }
  .title {
    position: absolute;
    left: 0;
    right: 0;
    top: 9px;
    text-align: center;
    font-size: 12px;
    color: #444;
  }
  .winctl {
    margin-left: auto;
    display: flex;
    gap: 17px;
    margin-right: 9px;
  }
  .winctl svg {
    width: 12px;
    height: 12px;
  }

  /* ribbon tabs */
  .tabs {
    height: 26px;
    flex: none;
    display: flex;
    align-items: stretch;
    box-sizing: border-box;
    border-bottom: 1px solid #ccc;
    line-height: 27px;
    color: #555;
  }
  .tab-file {
    width: 64px;
    background: #0a7565;
    color: #fff;
    text-align: center;
    margin-bottom: -1px;
  }
  .tab-home {
    margin-left: 4px;
    width: 58px;
    text-align: center;
    color: #0a7565;
    background: #fff;
    border: 1px solid #ccc;
    border-bottom: 0;
    margin-bottom: -1px;
  }
  .tab-page { margin-left: 16px; width: 28px; text-align: center; }
  .tab-layout { margin-left: 31px; }
  .tabs-right {
    margin-left: auto;
    display: flex;
    gap: 14px;
    padding-right: 13px;
  }
  .help { font-weight: 700; }

  /* ribbon */
  .ribbon {
    height: 95px;
    flex: none;
    box-sizing: border-box;
    display: flex;
    padding-top: 5px;
    border-bottom: 1px solid #ccc;
    background: #fff;
  }
  .grp {
    height: 85px;
    box-sizing: border-box;
    flex: none;
    border-right: 1px solid #ccc;
    display: flex;
    flex-direction: column;
    position: relative;
  }
  .grp-body {
    height: 75px;
    flex: none;
  }
  .grp-label {
    height: 14px;
    line-height: 14px;
    flex: none;
    text-align: center;
    color: #555;
  }
  .l-border { padding-right: 10px; }
  .l-style { padding-right: 4px; }
  .g-clip { width: 111px; }
  .g-font { width: 204px; }
  .g-align { width: 130px; }
  .g-border { width: 158px; }
  .g-format { width: 96px; }
  .g-style { width: 342px; }

  .clip-body {
    display: flex;
    padding: 5px 0 0 10px;
    box-sizing: border-box;
    color: #bbb;
  }
  .paste {
    width: 28px;
    display: flex;
    flex-direction: column;
    align-items: center;
    color: #888;
    line-height: 14px;
  }
  .paste span { margin-top: 3px; }
  .clip-list {
    margin-left: 8px;
    display: flex;
    flex-direction: column;
    gap: 5px;
    margin-top: -2px;
  }
  .clip-list div {
    height: 17px;
    display: flex;
    align-items: center;
    gap: 3px;
    font-size: 12px;
  }
  .font-body { padding: 13px 0 0 3px; box-sizing: border-box; }
  .combos {
    display: flex;
    gap: 5px;
    margin-left: 1px;
  }
  .combo {
    height: 22px;
    box-sizing: border-box;
    border: 1px solid #e0e0e0;
    display: flex;
    align-items: center;
    padding: 0 6px;
    color: #aaa;
    justify-content: flex-end;
  }
  .c-name { width: 130px; }
  .c-size { width: 60px; justify-content: space-between; }
  .font-row { margin-top: 5px; }
  .c-fcolor { margin-left: 2px; }
  .sep-f { margin-left: 3px; }
  .c-erase { margin-left: 2px; }
  .align-body { padding: 13px 0 0 3px; box-sizing: border-box; }
  .a-row2 { margin-top: 9px; }
  .border-body { padding: 14px 0 0 3px; box-sizing: border-box; }
  .cell.on {
    background: #d4eeea;
  }
  .c-btop { margin-left: 2px; }
  .b-row2 { margin-top: 6px; }
  .c-fill { margin-left: 1px; }
  .c-pen { margin-left: 5px; margin-right: -1px; }
  .line-style {
    width: 32px;
    height: 12px;
    box-sizing: border-box;
    border: 1px solid #000;
    margin-left: 11px;
    margin-right: 2px;
    flex: none;
    background: linear-gradient(#fff 3px, #000 3px, #000 5px, #fff 5px);
  }
  .launcher {
    position: absolute;
    width: 8px;
    height: 8px;
    right: 4px;
    bottom: -2px;
  }
  .format-body { padding: 18px 0 0 10px; box-sizing: border-box; }
  .fmt-text {
    display: flex;
    align-items: center;
    gap: 5px;
    color: #c4c4c4;
    height: 14px;
  }
  .fmt-row { margin-top: 6px; margin-left: -5px; }
  .c-cal { margin-left: 3px; }
  .style-body {
    display: flex;
    padding: 7px 0 0 10px;
    box-sizing: border-box;
  }
  .bigbtn {
    width: 58px;
    display: flex;
    flex-direction: column;
    align-items: center;
    text-align: center;
    line-height: 16px;
    color: #555;
  }
  .bigbtn span { white-space: nowrap; }
  .b-cond { width: 57px; }
  .b-copy { width: 52px; margin-left: 0; }
  .b-design { width: 58px; margin-left: -2px; }
  .none-wrap {
    margin-left: 21px;
    width: 120px;
    display: flex;
    flex-direction: column;
    align-items: center;
  }
  .none-box {
    width: 120px;
    height: 55px;
    box-sizing: border-box;
    border: 1px solid #ccc;
    text-align: center;
    line-height: 55px;
    font-size: 11.5px;
    color: #222;
    margin-bottom: 2px;
  }
  .none-wrap .dn { transform: scale(0.7); }

  /* workspace */
  .work {
    flex: 1;
    min-height: 0;
    display: flex;
    background: linear-gradient(#fcfcfc, #efefef);
    align-items: flex-start;
  }
  .toolbox {
    width: 30px;
    margin: 2px 0 0 3px;
    height: 443px;
    flex: none;
    box-sizing: border-box;
    border: 1px solid #ccc;
    background: #fff;
    display: flex;
    flex-direction: column;
    align-items: center;
  }
  .tool-grip {
    width: 18px;
    height: 2px;
    margin: 3px 0 6px;
    flex: none;
    background-image: linear-gradient(90deg, #bbb 50%, transparent 50%);
    background-size: 4px 2px;
  }
  .tool {
    height: 24px;
    width: 100%;
    flex: none;
    display: flex;
    flex-direction: column;
    align-items: center;
    justify-content: center;
  }
  .tool.more {
    height: 30px;
    justify-content: flex-start;
    box-sizing: border-box;
  }
  .caret {
    border-top: 3px solid transparent;
    border-bottom: 3px solid transparent;
    border-left: 4px solid #222;
    height: 0;
    margin-top: 2px;
  }
  .tool-sep {
    width: 24px;
    height: 1px;
    background: #ccc;
    flex: none;
    margin: 2px 0 1px;
  }
  .tool-sep.sep-1 { margin-top: -2px; }
  .tool-foot {
    margin-top: auto;
    width: 100%;
    height: 12px;
    background: #f5f5f5;
    display: flex;
    justify-content: flex-end;
    align-items: center;
    padding-right: 3px;
    box-sizing: border-box;
  }
  .tool-foot svg { width: 8px; height: 8px; }

  .center {
    width: 1516px;
    margin-left: 10px;
    flex: none;
    display: flex;
    flex-direction: column;
  }
  .doc-tabs {
    display: flex;
    gap: 4px;
    margin-top: 2px;
    height: 24px;
    flex: none;
  }
  .doc-tab {
    height: 24px;
    box-sizing: border-box;
    border: 1px solid #ccc;
    display: flex;
    align-items: center;
    background: #fff;
    gap: 3px;
    padding-left: 14px;
    color: #555;
  }
  .t-page { width: 78px; }
  .t-prev {
    width: 87px;
    border-top: 2px solid #0a7565;
    padding-left: 12px;
    gap: 4px;
  }
  .toolbar {
    margin-top: 10px;
    height: 28px;
    flex: none;
    box-sizing: border-box;
    border: 1px solid #ccc;
    background: #fff;
    display: flex;
    align-items: center;
    color: #444;
  }
  .tbtn {
    display: flex;
    align-items: center;
    gap: 8px;
    flex: none;
    box-sizing: border-box;
  }
  .w-print { width: 67px; margin-left: 10px; }
  .w-open { width: 72px; }
  .w-save { width: 55px; gap: 9px; }
  .c-send { margin-left: 9px; }
  .sep-a { margin-left: 8px; margin-right: 3px; }
  .sep-b { margin-right: 3px; }
  .c-t { margin-left: 1px; }
  .sep-c { margin: 0 2px; }
  .c-v4 { margin-left: 3px; }
  .c-fit { margin-left: 7px; }

  .viewer {
    height: 744px;
    flex: none;
    display: flex;
    margin-top: 5px;
  }
  .canvas {
    width: 1501px;
    height: 743px;
    overflow: hidden;
    flex: none;
  }
  .page {
    width: 846px;
    margin: 8px 0 0 327px;
    box-sizing: border-box;
    border: 2px solid #236b62;
    border-bottom: 0;
    background: #fff;
    padding-top: 25px;
    height: 1200px;
    font-family: "Liberation Sans", sans-serif;
    text-rendering: geometricPrecision;
    color: #000;
  }
  .band-title {
    margin-left: 89px;
    width: 635px;
    height: 33px;
    box-sizing: border-box;
    background: #e5ecd8;
    border: 1px solid #c69a55;
    font-size: 19.1px;
    line-height: 32px;
    padding-left: 1px;
    color: #111;
  }
  .band-yellow {
    margin: 5px 0 0 89px;
    width: 635px;
    height: 72px;
    box-sizing: border-box;
    background: #fff200;
    border: 1px solid #c69a55;
    border-bottom: 0;
    font-size: 19.2px;
    line-height: 21.5px;
    padding: 2px 0 0 1px;
  }
  .band-orange {
    margin-left: 89px;
    width: 635px;
    height: 32px;
    box-sizing: border-box;
    background: #ffc20e;
    border: 1px solid #c69a55;
    font-size: 19.2px;
    line-height: 30px;
    padding-left: 1px;
  }
  .list {
    margin: 15px 0 0 56px;
    width: 736px;
    height: 287px;
    box-sizing: border-box;
    border: 1px solid #000;
    font-size: 11.4px;
    line-height: 14.1px;
    padding: 1px 0 0 2px;
    color: #222;
  }
  .list.second {
    margin-top: -1px;
    height: 400px;
    padding-top: 1.5px;
  }
  .vscroll {
    width: 15px;
    height: 743px;
    flex: none;
    margin-left: 1px;
    display: flex;
    flex-direction: column;
    gap: 1px;
  }
  .sb-btn {
    height: 13px;
    flex: none;
    border: 1px solid #aaa;
    background: #fff;
    display: flex;
    align-items: center;
    justify-content: center;
  }
  .up {
    border-left: 4px solid transparent;
    border-right: 4px solid transparent;
    border-bottom: 4px solid #555;
  }
  .down {
    border-left: 4px solid transparent;
    border-right: 4px solid transparent;
    border-top: 4px solid #555;
  }
  .sb-thumb {
    height: 436px;
    flex: none;
    box-sizing: border-box;
    border: 1px solid #aaa;
    background: #fff;
  }
  .sb-gap { flex: 1; }
  .hscroll {
    height: 15px;
    flex: none;
    display: flex;
    justify-content: space-between;
    width: 1500px;
    margin-left: -1px;
  }
  .sb-h {
    width: 13px;
    height: 15px;
    box-sizing: border-box;
    border: 1px solid #d4d4d4;
    background: #f5f5f5;
    display: flex;
    align-items: center;
    justify-content: center;
  }
  .lt {
    border-top: 4px solid transparent;
    border-bottom: 4px solid transparent;
    border-right: 4px solid #aaa;
  }
  .rt {
    border-top: 4px solid transparent;
    border-bottom: 4px solid transparent;
    border-left: 4px solid #ccc;
  }
  .nav-row {
    display: flex;
    gap: 4px;
    margin-top: 5px;
    height: 28px;
    flex: none;
  }
  .navbar, .zoombar {
    height: 28px;
    box-sizing: border-box;
    border: 1px solid #ccc;
    background: #fff;
    display: flex;
    align-items: center;
  }
  .navbar { width: 1199px; }
  .zoombar { width: 313px; }
  .c-first { margin-left: 2px; }
  .sep-n { margin-left: 3px; }
  .pageof {
    width: 105px;
    padding-left: 2px;
    box-sizing: border-box;
    text-align: center;
    flex: none;
    color: #555;
  }
  .c-next { margin-left: 4px; }
  .z-a { margin-left: 2px; }
  .z-on {
    background: #99cbc2;
    height: 24px;
  }
  .sep-z { margin-left: 1px; height: 24px; }
  .zoom-val { margin-left: 17px; width: 36px; color: #555; }
  .zm-minus {
    width: 8px;
    height: 2px;
    background: #7fb9ae;
    margin-left: 9px;
    flex: none;
  }
  .slider {
    width: 120px;
    height: 1px;
    margin-left: 7px;
    background: #7fb9ae;
    position: relative;
    flex: none;
  }
  .slider span {
    position: absolute;
    left: 59px;
    top: -7px;
    width: 2px;
    height: 15px;
    background: #7fb9ae;
  }
  .zm-plus {
    width: 8px;
    height: 8px;
    margin-left: 8px;
    flex: none;
    background:
      linear-gradient(#7fb9ae, #7fb9ae) center/8px 2px no-repeat,
      linear-gradient(#7fb9ae, #7fb9ae) center/2px 8px no-repeat;
  }
  .btn-row {
    display: flex;
    align-items: center;
    margin-top: 7px;
    margin-left: 107px;
    height: 24px;
    flex: none;
  }
  .btn {
    width: 96px;
    height: 24px;
    margin: 0 6px 0 0;
    padding: 0;
    box-sizing: border-box;
    background: #fafafa;
    border: 1px solid #aaa;
    font: inherit;
    color: #555;
  }
  .btn:disabled {
    border-color: #ddd;
    background: #f2f2f2;
    color: #bbb;
  }
  .auto {
    display: flex;
    align-items: center;
    gap: 6px;
    color: #555;
  }
  .chk {
    width: 14px;
    height: 14px;
    box-sizing: border-box;
    border: 1px solid #aaa;
    background: #fff;
    display: block;
  }
  .chk svg { display: block; width: 12px; height: 12px; }

  /* property panel */
  .side {
    width: 344px;
    margin-left: 12px;
    flex: none;
    display: flex;
    flex-direction: column;
    padding-top: 3px;
  }
  .panel {
    height: 872px;
    flex: none;
    box-sizing: border-box;
    border: 1px solid #ccc;
    background: #fff;
    padding: 0 4px;
  }
  .prop-top {
    display: flex;
    align-items: center;
    gap: 8px;
    margin: 7px 0 0 2px;
    padding-bottom: 7px;
    height: 20px;
    box-sizing: content-box;
  }
  .prop-combo {
    width: 306px;
    height: 21px;
    box-sizing: border-box;
    border: 1px solid #ccc;
    background: #eee;
    font-family: "Liberation Sans", sans-serif;
    font-size: 12px;
    color: #666;
    display: flex;
    align-items: center;
    justify-content: space-between;
    padding-left: 3px;
  }
  .prop-combo i {
    width: 12px;
    height: 19px;
    background: #f2f2f2;
    display: flex;
    align-items: center;
    justify-content: center;
  }
  .prop-tools {
    border-top: 1px dotted #bbb;
    border-bottom: 1px dotted #bbb;
    margin: 0 -4px;
    padding: 9px 0 5px 10px;
    height: 25px;
    display: flex;
    gap: 0;
    align-items: stretch;
  }
  .pbtn {
    width: 24px;
    height: 24px;
    flex: none;
    display: flex;
    align-items: center;
    justify-content: center;
  }
  .pbtn.on { background: #99cbc2; }
  .pbtn.plain { width: 16px; }
  .pbtn.az { margin-left: 5px; }
  .pbtn.bolt { margin-left: 4px; }
  .psep {
    width: 1px;
    height: 28px;
    flex: none;
    margin: -2px 3px 0 10px;
    background: #ccc;
  }
  .psep.sep-first { margin-left: 5px; }
  .psep.sep-last { margin-left: 6px; }
  .ploc {
    width: 120px;
    height: 24px;
    background: #99cbc2;
    color: #444;
    line-height: 25px;
    text-align: center;
    white-space: nowrap;
    font-size: 12px;
    font-family: Roboto, sans-serif;
  }
  .props {
    margin-top: 2px;
    font-family: "Liberation Sans", sans-serif;
    text-rendering: geometricPrecision;
    font-size: 11px;
    color: #222;
  }
  .sec {
    border: 1px solid #ccc;
    margin-bottom: 4px;
    background: #fff;
  }
  .sec-head {
    height: 17px;
    line-height: 17px;
    background: #d4eeea;
    font-weight: 700;
    color: #444;
    display: flex;
    align-items: center;
    white-space: pre;
  }
  .tri-open {
    width: 0;
    height: 0;
    margin: 0 3px 0 3px;
    border-left: 4px solid transparent;
    border-right: 4px solid transparent;
    border-top: 5px solid #777;
  }
  .tri-closed {
    width: 0;
    height: 0;
    margin: 0 3px 0 5px;
    border-top: 4px solid transparent;
    border-bottom: 4px solid transparent;
    border-left: 5px solid #888;
  }
  .sub {
    height: 19px;
    box-sizing: border-box;
    margin: 0 1px 2px 15px;
    border: 1px solid #ccc;
    background: #d4eeea;
    display: flex;
    align-items: center;
    line-height: 18px;
    padding-right: 8px;
  }
  .sub b { width: 136px; color: #222; margin-left: 2px; }
  .sub + .sub { margin-bottom: 1px; }
  .sub em {
    font-style: normal;
    color: #444;
    margin-left: 65px;
  }
  .sub .dd { margin-right: 0; }
  .row {
    height: 17px;
    box-sizing: border-box;
    margin-left: 14px;
    border-bottom: 1px solid #ccc;
    display: flex;
    line-height: 17px;
  }
  .r-label {
    width: 139px;
    flex: none;
    box-sizing: border-box;
    padding-left: 3px;
    border-right: 1px solid #ccc;
    white-space: nowrap;
    overflow: hidden;
  }
  .r-val {
    flex: 1;
    display: flex;
    align-items: center;
    padding-left: 4px;
    min-width: 0;
    position: relative;
  }
  .r-val.dim { color: #555; }
  .r-text { flex: 1; padding-top: 1px; }
  .dd {
    width: 0;
    height: 0;
    margin-left: auto;
    margin-right: 6px;
    border-left: 3.5px solid transparent;
    border-right: 3.5px solid transparent;
    border-top: 4px solid #111;
    flex: none;
  }
  .dots {
    width: 17px;
    height: 14px;
    box-sizing: border-box;
    border: 1px solid #ccc;
    border-radius: 1px;
    margin-right: 2px;
    font-size: 10px;
    line-height: 12px;
    text-align: center;
    color: #555;
    flex: none;
  }
  .mg {
    width: 41px;
    height: 100%;
    box-sizing: border-box;
    display: flex;
    align-items: center;
    justify-content: space-between;
    padding-right: 4px;
    border-right: 1px solid #ccc;
    padding-left: 3px;
    margin-left: -3px;
    margin-right: 3px;
  }
  .mg:last-child { border-right: 0; }
  .mg svg { width: 9px; height: 9px; }
  .box {
    width: 12px;
    height: 12px;
    box-sizing: border-box;
    border: 1px solid #aaa;
    margin-left: -1px;
    display: block;
  }
  .box.ticked { background: #f0f0f0; }
  .box svg { display: block; width: 10px; height: 10px; }

  .side-tabs {
    display: flex;
    padding-left: 10px;
    gap: 4px;
    margin-top: -1px;
    position: relative;
  }
  .stab {
    width: 100px;
    height: 21px;
    box-sizing: border-box;
    background: #fff;
    border: 1px solid #ccc;
    border-top: 0;
    display: flex;
    align-items: center;
    gap: 3px;
    padding-left: 13px;
    color: #444;
  }
  .stab.tree { width: 106px; padding-left: 14px; gap: 2px; }
  .stab.active {
    border-bottom: 2px solid #0a7565;
    border-left: 0;
    border-right: 0;
    gap: 4px;
  }

  /* status bar */
  .status {
    height: 29px;
    flex: none;
    margin: 0 -1px;
    background: #0a7565;
    color: #fff;
    display: flex;
    align-items: center;
    font-size: 12px;
    position: relative;
  }
  .st {
    height: 23px;
    display: flex;
    align-items: center;
    box-sizing: border-box;
    border-right: 1px solid #cfe3de;
  }
  .st-unit { width: 156px; padding-left: 10px; }
  .st-up {
    width: 0;
    height: 0;
    margin-left: 6px;
    border-left: 3.5px solid transparent;
    border-right: 3.5px solid transparent;
    border-bottom: 3.5px solid #fff;
  }
  .st-check { width: 121px; padding-left: 8px; gap: 5px; }
  .st-name { letter-spacing: -0.45px; white-space: nowrap; }
  .st-right {
    width: 0;
    height: 0;
    border-top: 6px solid transparent;
    border-bottom: 6px solid transparent;
    border-left: 6px solid #fff;
  }
  .st-page { width: 106px; justify-content: center; }
  .st-pos { margin-left: 17px; }
  .st-zoom {
    margin-left: auto;
    display: flex;
    align-items: center;
    width: 211px;
  }
  .st-zoom span { width: 45px; }
  .st-minus {
    width: 7px;
    height: 2px;
    background: #fff;
    flex: none;
  }
  .st-slider {
    width: 121px;
    height: 1px;
    margin-left: 9px;
    background: #fff;
    position: relative;
    flex: none;
  }
  .st-slider span {
    position: absolute;
    width: 2px;
    height: 15px;
    left: 60px;
    top: -7px;
    background: #fff;
  }
  .st-plus {
    width: 8px;
    height: 8px;
    margin-left: 7px;
    flex: none;
    background:
      linear-gradient(#fff, #fff) center/8px 2px no-repeat,
      linear-gradient(#fff, #fff) center/2px 8px no-repeat;
  }
</style>
